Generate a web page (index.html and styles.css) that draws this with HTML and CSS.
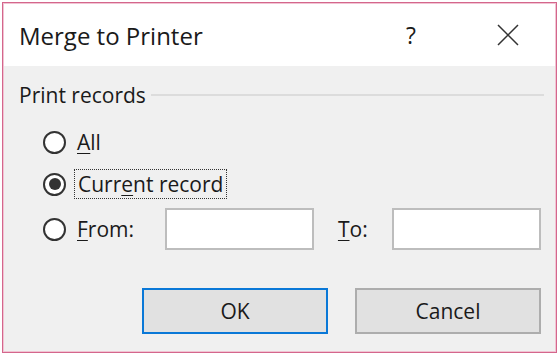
FILE: index.html
```html
<!DOCTYPE html>
<html lang="en">
<head>
  <meta charset="UTF-8">
  <title>Merge to Printer</title>
  <link rel="stylesheet" href="styles.css">
</head>
<body>
  <div class="dialog">
    <div class="titlebar">
      <span class="title">Merge to Printer</span>
      <span class="help">?</span>
      <span class="close">
        <svg width="22" height="22" viewBox="0 0 22 22"><path d="M1 1 L21 21 M21 1 L1 21" stroke="#333" stroke-width="1.5" fill="none"/></svg>
      </span>
    </div>

    <div class="content">
      <div class="group-head">
        <span>Print records</span>
        <span class="rule"></span>
      </div>

      <div class="row row-all">
        <span class="radio"></span>
        <span class="label"><u>A</u>ll</span>
      </div>
      <div class="row row-current">
        <span class="radio checked"></span>
        <span class="label focus">Curr<u>e</u>nt record</span>
      </div>
      <div class="row row-from">
        <span class="radio"></span>
        <span class="label from-label"><u>F</u>rom:</span>
        <span class="textbox"></span>
        <span class="label to-label"><u>T</u>o:</span>
        <span class="textbox"></span>
      </div>

      <div class="buttons">
        <button class="btn default">OK</button>
        <button class="btn">Cancel</button>
      </div>
    </div>
  </div>
</body>
</html>
```

FILE: styles.css
```css
body{
  margin: 0;
  background-color: #fff;
  font-family: "Open Sans", "Noto Sans", sans-serif;
  color: #1a1a1a;
}

.dialog{
  margin: 2px 0 0 2px;
  width: 553px;
  height: 349px;
  border: 1px solid #d4668c;
  box-shadow: inset 0 0 0 1px #f1c4d3;
  background-color: #f0f0f0;
  display: flex;
  flex-direction: column;
}

/* 타이틀바 */
.titlebar{
  height: 62px;
  background-color: #fff;
  display: flex;
  align-items: center;
  margin: 1px 1px 0 1px;
}
.title{
  font-size: 24px;
  margin-left: 15px;
  flex: 1;
}
.help{
  font-size: 23px;
  width: 20px;
  text-align: center;
  margin-right: 76px;
}
.close{
  display: flex;
  margin-right: 36px;
}

/* 내용 */
.content{
  padding: 0 15px 0 16px;
  font-size: 21px;
}
.group-head{
  display: flex;
  align-items: center;
  height: 26px;
  margin-top: 16px;
}
.group-head .rule{
  flex: 1;
  height: 2px;
  background-color: #dcdcdc;
  margin-left: 5px;
  margin-right: -3px;
}

.row{
  display: flex;
  align-items: center;
}
.row-all{height: 30px; margin-top: 19px;}
.row-current{height: 30px; margin-top: 12px;}
.row-from{height: 42px; margin-top: 9px;}

.radio{
  width: 19px;
  height: 19px;
  border: 2px solid #333;
  border-radius: 50%;
  background-color: #fff;
  margin-left: 24px;
  margin-right: 11px;
  display: flex;
  align-items: center;
  justify-content: center;
  flex-shrink: 0;
}
.radio.checked:after{
  content: '';
  width: 12px;
  height: 12px;
  border-radius: 50%;
  background-color: #333;
}

.label u{text-decoration-thickness: 1px; text-underline-offset: 3px;}
.focus{
  border: 1px dotted #333;
  padding: 0 3px;
  line-height: 28px;
  margin-left: -3px;
}
.from-label{width: 88px;}
.textbox{
  width: 146px;
  height: 38px;
  border: 2px solid #bdbdbd;
  background-color: #fff;
}
.to-label{
  margin-left: 24px;
  width: 54px;
}

.buttons{
  display: flex;
  justify-content: flex-end;
  gap: 27px;
  margin-top: 38px;
}
.btn{
  width: 186px;
  height: 46px;
  font-family: inherit;
  font-size: 21px;
  color: #1a1a1a;
  background-color: #e1e1e1;
  border: 2px solid #adadad;
}
.btn.default{border-color: #0a78d7;}
```
